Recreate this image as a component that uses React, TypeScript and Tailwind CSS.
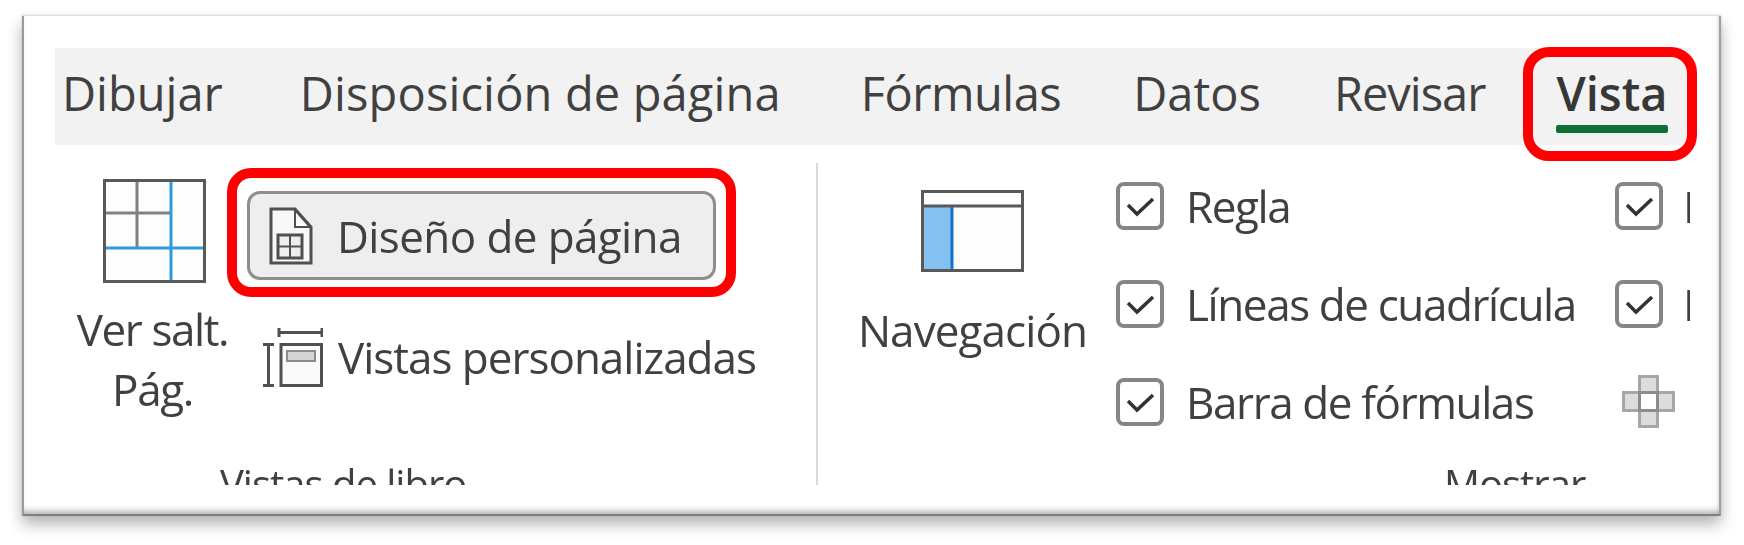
const font = "font-['Open_Sans','Noto_Sans',sans-serif]";

function GridIcon() {
  return (
    <svg width="103" height="104" viewBox="0 0 103 104" fill="none">
      <rect x="1.5" y="1.5" width="100" height="101" fill="#fdfdfd" stroke="#595959" strokeWidth="3" />
      <path d="M34 3V68M3 34H68" stroke="#808080" strokeWidth="3" />
      <path d="M68 3V101M3 69H100" stroke="#2e9bdc" strokeWidth="3" />
    </svg>
  );
}

function NavIcon() {
  return (
    <svg width="103" height="82" viewBox="0 0 103 82" fill="none">
      <rect x="1.5" y="1.5" width="100" height="79" fill="#fdfdfd" stroke="#595959" strokeWidth="3" />
      <rect x="3" y="17" width="28" height="62" fill="#85c1f0" />
      <path d="M31 17V79" stroke="#1473c7" strokeWidth="3" />
      <path d="M2 16H101" stroke="#595959" strokeWidth="3" />
    </svg>
  );
}

function DocIcon() {
  return (
    <svg width="44" height="58" viewBox="0 0 44 58" fill="none">
      <path d="M2 2H26L42 20V56H2Z" fill="#f8f8f8" stroke="#505050" strokeWidth="3" />
      <path d="M26 3V20H41Z" fill="#fff" stroke="#505050" strokeWidth="2" />
      <rect x="9" y="28" width="24" height="23" fill="#eee" stroke="#505050" strokeWidth="3" />
      <path d="M21 28V51M9 39.5H33" stroke="#505050" strokeWidth="2" />
    </svg>
  );
}

function CustomViewIcon() {
  return (
    <svg width="60" height="60" viewBox="0 0 60 60" fill="none">
      <path d="M16 1V10M59 1V10M16 5.5H59" stroke="#505050" strokeWidth="3" />
      <path d="M0 17.5H11M0 58.5H11M5.5 17.5V58.5" stroke="#505050" strokeWidth="3" />
      <rect x="18" y="17.5" width="40.5" height="41" fill="#fafafa" stroke="#505050" strokeWidth="3" />
      <rect x="24" y="24" width="28" height="10" fill="#d4d4d4" stroke="#8c8c8c" strokeWidth="2" />
    </svg>
  );
}

function FreezeIcon() {
  return (
    <svg width="53" height="53" viewBox="0 0 53 53" fill="none">
      <g fill="#dcdcdc" stroke="#a6a6a6" strokeWidth="3">
        <rect x="17.5" y="1.5" width="18" height="16" />
        <rect x="17.5" y="35.5" width="18" height="16" />
        <rect x="1.5" y="17.5" width="16" height="18" />
        <rect x="35.5" y="17.5" width="16" height="18" />
      </g>
      <rect x="17.5" y="17.5" width="18" height="18" fill="#fff" stroke="#8c8c8c" strokeWidth="3" />
    </svg>
  );
}

function Check({ label, clip }: { label: string; clip?: boolean }) {
  return (
    <div className="flex h-[48px] items-center">
      <div className="flex h-[48px] w-[48px] shrink-0 items-center justify-center rounded-[8px] border-[4px] border-[#858585] bg-white">
        <svg width="40" height="40" viewBox="0 0 40 40" fill="none">
          <path d="M8 19L17 28L33 13" stroke="#333" strokeWidth="3.5" />
        </svg>
      </div>
      <span className={clip ? "ml-[20px] w-[7px] overflow-hidden whitespace-nowrap" : "ml-[22px] whitespace-nowrap"}>{label}</span>
    </div>
  );
}

export default function App() {
  const tabs = [
    { label: "Dibujar", cls: "mr-[77px]" },
    { label: "Disposición de página", cls: "mr-[80px] tracking-[0.15px]" },
    { label: "Fórmulas", cls: "mr-[72px] tracking-[-0.5px]" },
    { label: "Datos", cls: "mr-[73px]" },
    { label: "Revisar", cls: "mr-[71px] tracking-[-1px]" },
  ];

  return (
    <div className={`h-[545px] w-[1744px] overflow-hidden bg-white pl-[22px] pt-[16px] text-[#404040] ${font}`}>
      <div className="h-[500px] w-[1699px] border-l-2 border-r-2 border-b-2 border-l-[#9a9a9a] border-r-[#a0a0a0] border-b-[#808080] bg-white shadow-[0_8px_14px_rgba(0,0,0,0.3),inset_0_-7px_6px_-4px_rgba(0,0,0,0.3),inset_-4px_0_4px_-3px_rgba(0,0,0,0.12),0_-1px_2px_rgba(0,0,0,0.15)]">
        <div className="h-full pl-[31px] pt-[32px] blur-[0.5px]">
          <div className="flex h-[97px] w-[1636px] items-start bg-[#f2f2f2] pl-[7px] pt-[16px] text-[47px] leading-[58px]">
            {tabs.map((t) => (
              <span key={t.label} className={t.cls}>{t.label}</span>
            ))}
            <div className="relative font-semibold text-[#373737]">
              <span>Vista</span>
              <div className="mt-[3px] h-[8px] rounded-[2px] bg-[#0e7035]" />
              <div className="absolute -left-[33px] -top-[17px] h-[114px] w-[174px] rounded-[26px] border-[10px] border-[#ff0000]" />
            </div>
          </div>

          <div className="flex h-[340px] w-[1636px] overflow-hidden text-[44px] leading-[60px] tracking-[-1.4px]">
            <div className="relative flex w-[763px] shrink-0">
              <div className="flex">
                <div className="ml-[23px] flex w-[149px] shrink-0 flex-col items-center whitespace-nowrap pt-[34px]">
                  <div className="ml-[3px]"><GridIcon /></div>
                  <div className="mt-[16px]">Ver salt.</div>
                  <div>Pág.</div>
                </div>
                <div className="pt-[23px]">
                  <div className="h-[129px] w-[509px] rounded-[24px] border-[10px] border-[#ff0000] px-[10px] pb-[7px] pt-[13px]">
                    <div className="flex h-[89px] items-center rounded-[13px] border-[3px] border-[#8e8e8e] bg-[#eeeeee] pl-[19px] tracking-[-0.6px]">
                      <DocIcon />
                      <span className="ml-[24px] whitespace-nowrap">Diseño de página</span>
                    </div>
                  </div>
                  <div className="ml-[36px] mt-[30px] flex items-center tracking-[-1px]">
                    <CustomViewIcon />
                    <span className="ml-[15px] whitespace-nowrap">Vistas personalizadas</span>
                  </div>
                </div>
              </div>
              <div className="ml-auto mt-[18px] h-[322px] w-[2px] bg-[#d9d9d9]" />
              <div className="absolute left-[165px] top-[309px] whitespace-nowrap text-[40px] tracking-[-1px]">Vistas de libro</div>
            </div>

            <div className="relative grow">
              <div className="flex">
                <div className="ml-[40px] flex w-[229px] shrink-0 flex-col items-center whitespace-nowrap pt-[45px] tracking-[-0.9px]">
                  <NavIcon />
                  <div className="mt-[28px]">Navegación</div>
                </div>
                <div className="ml-[29px] flex w-[499px] shrink-0 flex-col gap-[50px] pt-[37px]">
                  <Check label="Regla" />
                  <Check label="Líneas de cuadrícula" />
                  <Check label="Barra de fórmulas" />
                </div>
                <div className="flex flex-col gap-[50px] pt-[37px]">
                  <Check label="Encabezados" clip />
                  <Check label="Notas" clip />
                  <div className="-mt-[3px] ml-[7px]"><FreezeIcon /></div>
                </div>
              </div>
              <div className="absolute left-[626px] top-[309px] whitespace-nowrap text-[40px] tracking-[-1px]">Mostrar</div>
            </div>
          </div>
        </div>
      </div>
    </div>
  );
}
